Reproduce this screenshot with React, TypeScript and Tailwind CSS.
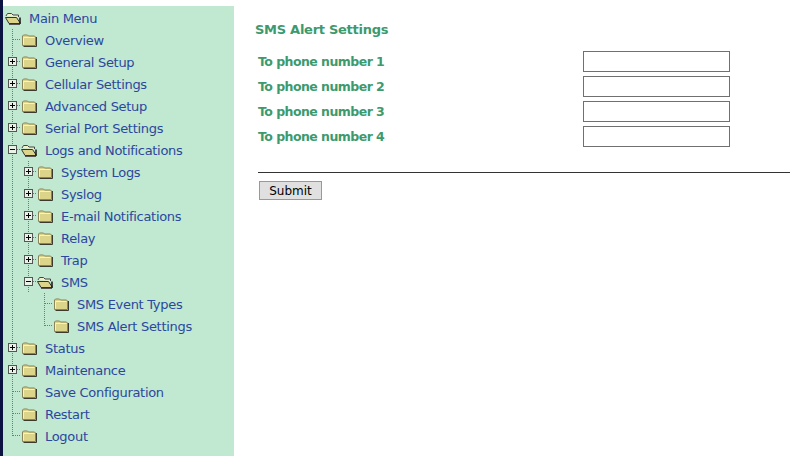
import React from 'react';

type Cell = 'I' | 'T' | 'L' | 'plus' | 'minus' | 'blank';

type MenuItem = {
  label: string;
  cells: Cell[];
  open?: boolean;
};

const menu: MenuItem[] = [
  { label: 'Main Menu', cells: [], open: true },
  { label: 'Overview', cells: ['T'] },
  { label: 'General Setup', cells: ['plus'] },
  { label: 'Cellular Settings', cells: ['plus'] },
  { label: 'Advanced Setup', cells: ['plus'] },
  { label: 'Serial Port Settings', cells: ['plus'] },
  { label: 'Logs and Notifications', cells: ['minus'], open: true },
  { label: 'System Logs', cells: ['I', 'plus'] },
  { label: 'Syslog', cells: ['I', 'plus'] },
  { label: 'E-mail Notifications', cells: ['I', 'plus'] },
  { label: 'Relay', cells: ['I', 'plus'] },
  { label: 'Trap', cells: ['I', 'plus'] },
  { label: 'SMS', cells: ['I', 'minus'], open: true },
  { label: 'SMS Event Types', cells: ['I', 'blank', 'T'] },
  { label: 'SMS Alert Settings', cells: ['I', 'blank', 'L'] },
  { label: 'Status', cells: ['plus'] },
  { label: 'Maintenance', cells: ['plus'] },
  { label: 'Save Configuration', cells: ['T'] },
  { label: 'Restart', cells: ['T'] },
  { label: 'Logout', cells: ['L'] },
];

const phones = [1, 2, 3, 4];

// one 16x22 piece of the dotted tree
function TreeCell({ type }: { type: Cell }) {
  const dots = { stroke: '#777', strokeWidth: 1, strokeDasharray: '1 1' };
  return (
    <svg width="16" height="22" viewBox="0 0 16 22" className="shrink-0 block">
      {type !== 'blank' && <path d={type === 'L' ? 'M7.5 0V11' : 'M7.5 0V22'} {...dots} />}
      {(type === 'T' || type === 'L') && <path d="M8 10.5H16" {...dots} />}
      {(type === 'plus' || type === 'minus') && (
        <>
          <path d="M12 10.5H16" {...dots} />
          <rect x="3.5" y="6.5" width="8" height="8" fill="#e8f2e6" stroke="#555" />
          <path d="M5 10.5H10" stroke="#000" />
          {type === 'plus' && <path d="M7.5 8V13" stroke="#000" />}
        </>
      )}
    </svg>
  );
}

function Folder({ open }: { open?: boolean }) {
  if (open) {
    return (
      <svg width="16" height="22" viewBox="0 0 16 22" className="shrink-0 block">
        <path d="M1 9L2.5 6.5H6.5L8 8H13.5V10" fill="#f4f0c8" stroke="#444" />
        <path d="M0.5 10.5H11.5L15.5 16.5H4L0.5 10.5Z" fill="#dcd488" stroke="#333" />
        <path d="M15 10.5V16.5" stroke="#111" strokeWidth="1.5" />
        <path d="M4 17.5H15" stroke="#555" />
      </svg>
    );
  }
  return (
    <svg width="16" height="22" viewBox="0 0 16 22" className="shrink-0 block">
      <path d="M1.5 7L2.5 6H6.5L7.5 7H13.5L14.5 8V16.5H1.5Z" fill="#dcd488" stroke="#8a8558" />
      <path d="M2.5 8.5H13.5M2.5 8.5V15.5" stroke="#f6f2d0" />
      <path d="M15.5 8V17.5H2.5" fill="none" stroke="#3a3a30" />
    </svg>
  );
}

export default function App() {
  return (
    <div
      className="flex h-[456px] w-[790px] overflow-hidden bg-white"
      style={{ fontFamily: '"DejaVu Sans", Verdana, sans-serif' }}
    >
      {/* left strip */}
      <div className="w-[3px] shrink-0 bg-[#0b1440]" />

      {/* tree menu */}
      <aside className="mt-[6px] w-[231px] shrink-0 bg-[#c1e8d0] pl-[2px] pt-[1px]">
        {menu.map((item) => (
          <div key={item.label} className="flex h-[22px] items-center">
            {item.cells.map((c, i) => (
              <TreeCell key={i} type={c} />
            ))}
            <Folder open={item.open} />
            <span className="ml-[8px] whitespace-nowrap pt-[2px] text-[13px] tracking-[-0.3px] text-[#2b479f]">
              {item.label}
            </span>
          </div>
        ))}
      </aside>

      {/* settings form */}
      <main className="min-w-0 flex-1 pl-[21px] pt-[21px]">
        <h1 className="text-[13px] font-bold leading-[17px] tracking-[-0.27px] text-[#3c9a6e]">
          SMS Alert Settings
        </h1>
        <div className="ml-[3px] mt-[11px]">
          {phones.map((n) => (
            <div key={n} className="flex h-[25px] items-center">
              <label className="w-[325px] pt-[2px] text-[12.5px] font-bold tracking-[-0.54px] text-[#3c9a6e]">
                To phone number {n}
              </label>
              <input
                type="text"
                className="h-[21px] w-[147px] border border-[#707070] bg-white outline-none"
              />
            </div>
          ))}
          <div className="mt-[23px] h-[1px] bg-[#333]" />
          <button
            type="button"
            className="ml-[1px] mt-[8px] block h-[19px] w-[63px] border border-[#999] bg-[#e0e0e0] text-[12px] leading-none text-black"
          >
            Submit
          </button>
        </div>
      </main>
    </div>
  );
}
